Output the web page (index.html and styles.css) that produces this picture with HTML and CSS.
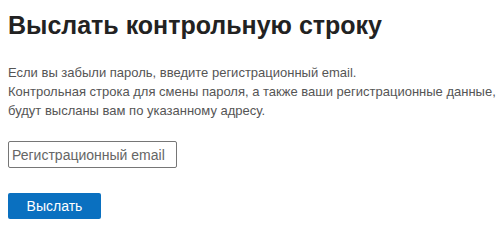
FILE: index.html
```html
<!DOCTYPE html>
<html lang="ru">
<head>
<meta charset="utf-8">
<link rel="stylesheet" href="styles.css">
</head>
<body>
<div class="page">
  <h1 class="title">Выслать контрольную строку</h1>
  <p class="info">Если вы забыли пароль, введите регистрационный email.<br>Контрольная строка для смены пароля, а также ваши регистрационные данные, будут высланы вам по указанному адресу.</p>
  <input class="email" type="text" placeholder="Регистрационный email">
  <button class="send" type="button">Выслать</button>
</div>
</body>
</html>
```
FILE: styles.css
```css
html, body {
  margin: 0;
  padding: 0;
  background: #fff;
}
.page {
  padding: 8px 0 0 8px;
  font-family: "Liberation Sans", Arial, sans-serif;
  display: flex;
  flex-direction: column;
  align-items: flex-start;
}
.title {
  margin: 3px 0 0 0;
  font-size: 25px;
  line-height: 28px;
  font-weight: bold;
  color: #222;
}
.info {
  margin: 24px 0 0 0;
  font-size: 13px;
  line-height: 19px;
  color: #555;
}
.email {
  margin-top: 21px;
  width: 169px;
  height: 27px;
  box-sizing: border-box;
  border: 1px solid #767676;
  border-radius: 2px;
  padding: 0 3px;
  font-family: "Liberation Sans", Arial, sans-serif;
  font-size: 14px;
  color: #333;
}
.email::placeholder {
  color: #666;
}
.send {
  margin-top: 25px;
  width: 93px;
  height: 26px;
  border: none;
  border-radius: 2px;
  background: #0a70c0;
  color: #fff;
  font-family: "Liberation Sans", Arial, sans-serif;
  font-size: 14px;
  padding: 0;
}
```
